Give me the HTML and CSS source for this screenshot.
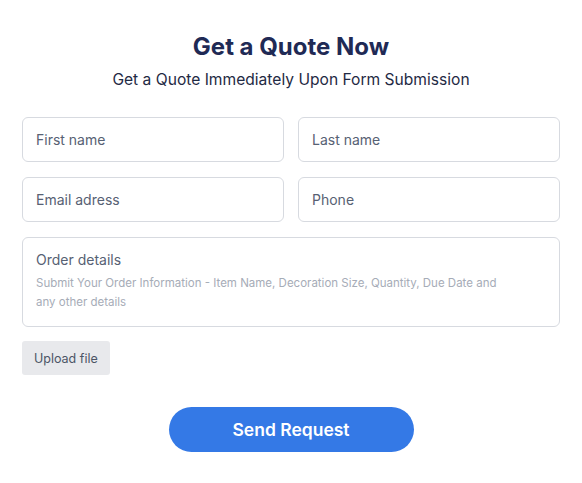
FILE: index.html
```html
<!DOCTYPE html>
<html>
<head>
<meta charset="utf-8">
<link rel="stylesheet" href="styles.css">
</head>
<body>
<div class="quote">
  <h1 class="title">Get a Quote Now</h1>
  <p class="subtitle">Get a Quote Immediately Upon Form Submission</p>
  <form class="form">
    <div class="grid">
      <div class="field"><span class="label">First name</span></div>
      <div class="field"><span class="label">Last name</span></div>
      <div class="field"><span class="label">Email adress</span></div>
      <div class="field"><span class="label">Phone</span></div>
    </div>
    <div class="area">
      <span class="label">Order details</span>
      <span class="hint">Submit Your Order Information - Item Name, Decoration Size, Quantity, Due Date and any other details</span>
    </div>
    <div class="upload-row"><span class="upload">Upload file</span></div>
    <div class="submit-row"><span class="submit">Send Request</span></div>
  </form>
</div>
</body>
</html>
```

FILE: styles.css
```css
html, body {
  margin: 0;
  padding: 0;
  background: #ffffff;
}
body {
  font-family: Inter, "Noto Sans", sans-serif;
}
.quote {
  width: 538px;
  margin: 0 auto;
  padding-top: 32px;
  display: flex;
  flex-direction: column;
}
.title {
  margin: 0;
  text-align: center;
  font-size: 24px;
  font-weight: 700;
  line-height: 30px;
  color: #1f2a55;
}
.subtitle {
  margin: 8px 0 0;
  text-align: center;
  font-size: 15.6px;
  line-height: 20px;
  color: #1f2a44;
}
.form {
  margin-top: 27px;
  display: flex;
  flex-direction: column;
}
.grid {
  display: grid;
  grid-template-columns: 1fr 1fr;
  column-gap: 14px;
  row-gap: 15px;
}
.field {
  height: 45px;
  box-sizing: border-box;
  border: 1px solid #d7dae0;
  border-radius: 6px;
  padding: 0 13px;
  display: flex;
  align-items: center;
}
.label {
  font-size: 14px;
  color: #576173;
}
.area {
  margin-top: 15px;
  height: 90px;
  box-sizing: border-box;
  border: 1px solid #d7dae0;
  border-radius: 6px;
  padding: 13px 13px;
  display: flex;
  flex-direction: column;
  gap: 6px;
}
.hint {
  max-width: 470px;
  font-size: 11.5px;
  line-height: 19px;
  color: #a6acb7;
}
.upload-row {
  margin-top: 14px;
  display: flex;
}
.upload {
  height: 34px;
  padding: 0 12px;
  display: flex;
  align-items: center;
  background: #e8e9ec;
  border-radius: 3px;
  font-size: 12.5px;
  color: #4c5566;
}
.submit-row {
  margin-top: 32px;
  display: flex;
  justify-content: center;
}
.submit {
  width: 245px;
  height: 45px;
  border-radius: 23px;
  background: #3479e6;
  color: #ffffff;
  font-size: 17.5px;
  font-weight: 600;
  display: flex;
  align-items: center;
  justify-content: center;
}
```
